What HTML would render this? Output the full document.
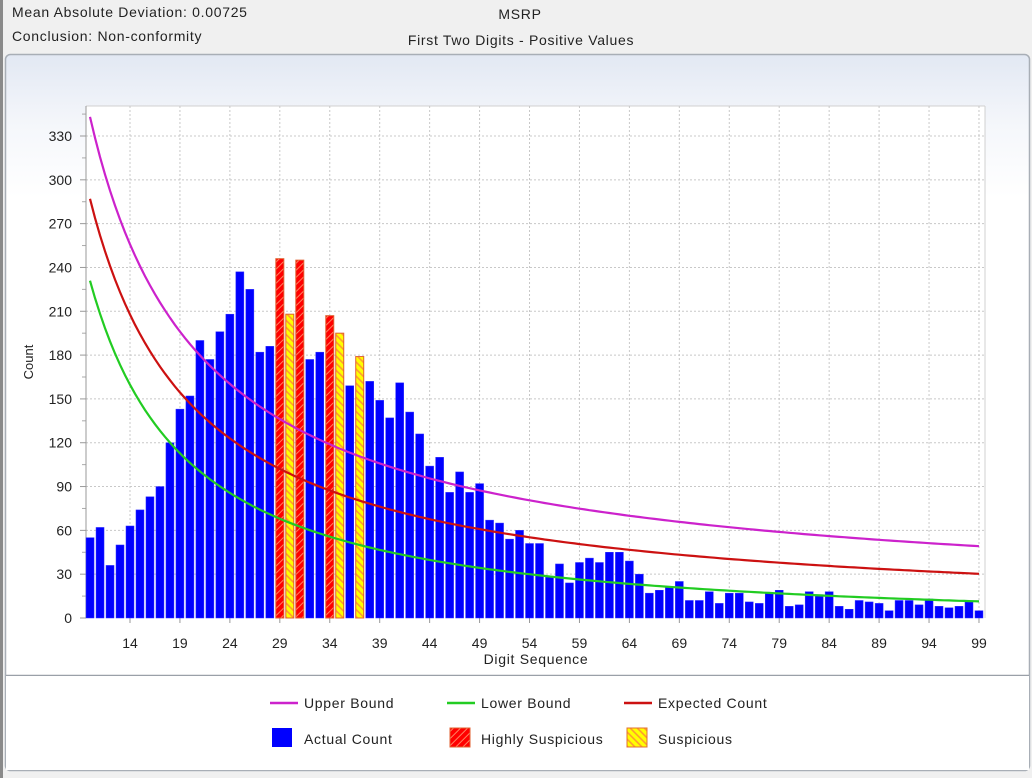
<!DOCTYPE html>
<html><head><meta charset="utf-8"><style>
html,body{margin:0;padding:0;background:#f0f0f0;width:1032px;height:778px;overflow:hidden;font-family:"Liberation Sans",sans-serif;}
svg text{font-family:"Liberation Sans",sans-serif;fill:#222;}
.w{letter-spacing:0.7px;}
</style></head><body>
<svg id="s" width="1032" height="778" xmlns="http://www.w3.org/2000/svg">
<defs>
<linearGradient id="bg" x1="0" y1="0" x2="0" y2="1">
<stop offset="0" stop-color="#e2e8f3"/><stop offset="0.1" stop-color="#f5f7fb"/><stop offset="0.2" stop-color="#ffffff"/>
</linearGradient>
<pattern id="hr" width="5" height="5" patternUnits="userSpaceOnUse" patternTransform="rotate(45)">
<rect width="5" height="5" fill="#ff0000"/><rect width="1" height="5" fill="#ff8060"/></pattern>
<pattern id="hy" width="5" height="5" patternUnits="userSpaceOnUse" patternTransform="rotate(-45)">
<rect width="5" height="5" fill="#ffff00"/><rect width="1.6" height="5" fill="#ff9a30"/></pattern>
</defs>
<rect x="0" y="0" width="1032" height="778" fill="#f0f0f0"/>
<line x1="1.5" y1="0" x2="1.5" y2="778" stroke="#8a8a8a" stroke-width="3"/>
<text class="w" x="12" y="17" font-size="14">Mean Absolute Deviation: 0.00725</text>
<text class="w" x="12" y="41" font-size="14">Conclusion: Non-conformity</text>
<text class="w" x="520" y="19" font-size="14" text-anchor="middle">MSRP</text>
<text class="w" x="521" y="45" font-size="14" text-anchor="middle">First Two Digits - Positive Values</text>
<rect x="5.5" y="54.5" width="1024" height="716" rx="5" fill="url(#bg)" stroke="#a8aeb6" stroke-width="1.5"/>
<line x1="6" y1="675.5" x2="1029" y2="675.5" stroke="#9aa0a8" stroke-width="1.5"/>
<rect x="6" y="676" width="1023" height="94" fill="#fff"/>
<g id="chart"></g>
<text transform="translate(33,362) rotate(-90)" font-size="13" text-anchor="middle">Count</text>
<text class="w" x="536" y="664" font-size="14" text-anchor="middle">Digit Sequence</text>
<line x1="270" y1="703" x2="298" y2="703" stroke="#cc22cc" stroke-width="2.5"/>
<text class="w" x="304" y="708" font-size="14">Upper Bound</text>
<line x1="447" y1="703" x2="475" y2="703" stroke="#22cc22" stroke-width="2.5"/>
<text class="w" x="481" y="708" font-size="14">Lower Bound</text>
<line x1="624" y1="703" x2="652" y2="703" stroke="#cc1111" stroke-width="2.5"/>
<text class="w" x="658" y="708" font-size="14">Expected Count</text>
<rect x="272" y="728" width="20" height="19" fill="#0000ff"/>
<text class="w" x="304" y="744" font-size="14">Actual Count</text>
<rect x="450" y="728" width="20" height="19" fill="url(#hr)" stroke="#e06030"/>
<text class="w" x="481" y="744" font-size="14">Highly Suspicious</text>
<rect x="627" y="728" width="20" height="19" fill="url(#hy)" stroke="#e07030"/>
<text class="w" x="658" y="744" font-size="14">Suspicious</text>
</svg>
<script>
var v=[55,62,36,50,63,74,83,90,120,143,152,190,177,196,208,237,225,182,186,246,208,245,177,182,207,195,159,179,162,149,137,161,141,126,104,110,86,100,86,92,67,65,54,60,51,51,28,37,24,38,41,38,45,45,39,30,17,19,21,25,12,12,18,10,17,17,11,10,17,19,8,9,18,16,18,8,6,12,11,10,5,12,12,9,13,8,7,8,11,5];
var red={29:1,31:1,34:1},yel={30:1,35:1,37:1};
var L=86,R=985,T=106,B=618,k=482/330;
function X(d){return 130+(d-14)*9.988;}
function Y(c){return B-c*k;}
var h='<rect x="'+L+'" y="'+T+'" width="'+(R-L)+'" height="'+(B-T)+'" fill="#fff"/>';
h+='<line x1="'+L+'" y1="'+T+'" x2="'+R+'" y2="'+T+'" stroke="#d0d0d0"/><line x1="'+R+'" y1="'+T+'" x2="'+R+'" y2="'+B+'" stroke="#d0d0d0"/>';
for(var c=0;c<=330;c+=30){var y=Y(c);
 if(c>0)h+='<line x1="'+L+'" y1="'+y+'" x2="'+R+'" y2="'+y+'" stroke="#c8c8c8" stroke-dasharray="2,2"/>';
 h+='<line x1="'+(L-6)+'" y1="'+y+'" x2="'+L+'" y2="'+y+'" stroke="#999"/>';
 h+='<text x="72" y="'+(y+5)+'" font-size="14" text-anchor="end">'+c+'</text>';
 var y2=Y(c+15);h+='<line x1="'+(L-4)+'" y1="'+y2+'" x2="'+L+'" y2="'+y2+'" stroke="#aaa"/>';}
for(var d=14;d<=99;d+=5){var x=X(d);
 h+='<line x1="'+x+'" y1="'+T+'" x2="'+x+'" y2="'+B+'" stroke="#c8c8c8" stroke-dasharray="2,2"/>';
 h+='<line x1="'+x+'" y1="'+B+'" x2="'+x+'" y2="'+(B+5)+'" stroke="#999"/>';
 h+='<text x="'+x+'" y="'+(B+30)+'" font-size="14" text-anchor="middle">'+d+'</text>';}
h+='<line x1="'+L+'" y1="'+T+'" x2="'+L+'" y2="'+B+'" stroke="#999"/>';
for(var i=0;i<90;i++){var d=10+i,x=X(d)-4,y=Y(v[i]);
 var f=red[d]?'url(#hr)':yel[d]?'url(#hy)':'#0000ff';
 var st=(red[d]||yel[d])?' stroke="#e06030" stroke-width="1"':' stroke="#3030ff" stroke-width="0.5"';
 h+='<rect x="'+x+'" y="'+y+'" width="8" height="'+(B-y)+'" fill="'+f+'"'+st+'/>';}
var N=6934,pe='',pu='',pl='';
for(var d=10;d<=99;d+=0.5){var p=Math.log10(1+1/d),e=N*p,s=Math.sqrt(N*p*(1-p))*3.35+0.5;
 var x=X(d).toFixed(1);pe+=(d==10?'M':'L')+x+','+Y(e).toFixed(1);pu+=(d==10?'M':'L')+x+','+Y(e+s).toFixed(1);pl+=(d==10?'M':'L')+x+','+Y(e-s).toFixed(1);}
h+='<path d="'+pu+'" fill="none" stroke="#cc22cc" stroke-width="2.2"/>';
h+='<path d="'+pe+'" fill="none" stroke="#cc1111" stroke-width="2.2"/>';
h+='<path d="'+pl+'" fill="none" stroke="#22cc22" stroke-width="2.2"/>';
document.getElementById('chart').innerHTML=h;
</script>
</body></html>
